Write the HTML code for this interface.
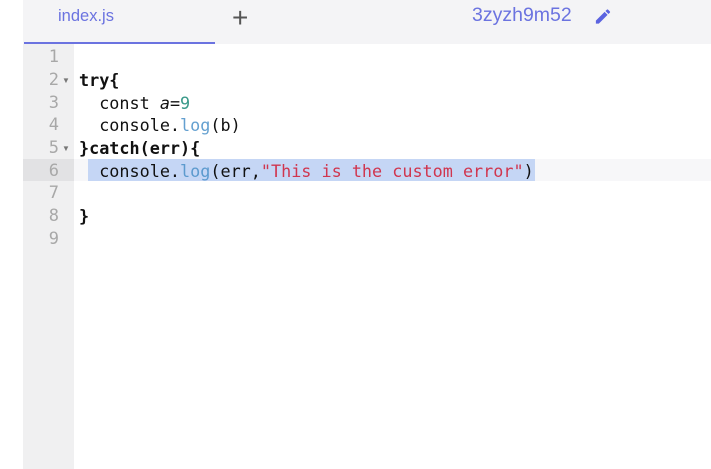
<!DOCTYPE html>
<html><head><style>
body{margin:0;width:711px;height:469px;background:#fff;overflow:hidden;position:relative;font-family:"Liberation Sans",sans-serif}
.hdr{position:absolute;left:23px;top:0;width:688px;height:44px;background:#f4f4f6}
.tab{position:absolute;left:58px;top:7px;font-size:16.5px;color:#6b73e0}
.ul{position:absolute;left:24px;top:42px;width:191px;height:2px;background:#6b73e0}
.plus{position:absolute;left:232px;top:2px;font-size:28px;color:#555;}
.name{position:absolute;left:472px;top:4px;font-size:19.5px;color:#6b73e0}
.gut{position:absolute;left:23px;top:44px;width:51px;height:425px;background:#f0f0f1}
.ln{position:absolute;left:23px;width:36px;text-align:right;font-family:"DejaVu Sans Mono",monospace;font-size:17px;color:#a8a8a8;height:22.7px;line-height:22.7px}
.code{position:absolute;left:79px;font-family:"DejaVu Sans Mono",monospace;font-size:16.8px;color:#111;white-space:pre;height:22.7px;line-height:22.7px}
.bd{font-weight:bold}
.arr{position:absolute;left:62px;font-size:8px;color:#777}
.b{color:#4a90c8;opacity:.85}.n{color:#3a9a8a}.s{color:#d0364f}
</style></head><body>
<div class="hdr"></div>
<div class="tab">index.js</div>
<div class="ul"></div>
<div class="plus">+</div>
<div class="name">3zyzh9m52</div>
<svg style="position:absolute;left:593px;top:7px" width="20" height="19" viewBox="0 0 24 24"><path fill="#5b63e0" d="M3 17.25V21h3.75L17.8 9.94l-3.75-3.75L3 17.25zM20.7 7.04a1 1 0 000-1.41l-2.34-2.34a1 1 0 00-1.41 0l-1.83 1.83 3.75 3.75 1.83-1.83z"/></svg>
<div class="gut"></div>
<div style="position:absolute;left:23px;top:159px;width:51px;height:22px;background:#e2e2e4"></div>
<div style="position:absolute;left:74px;top:159px;width:637px;height:22px;background:#f7f7f9"></div>
<div style="position:absolute;left:88px;top:159px;width:447px;height:22px;background:#c5d6f5"></div>
<div class="ln" style="top:46px">1</div>
<div class="ln" style="top:69px">2</div><div class="arr" style="top:76px">▼</div>
<div class="ln" style="top:92px">3</div>
<div class="ln" style="top:114px">4</div>
<div class="ln" style="top:137px">5</div><div class="arr" style="top:144px">▼</div>
<div class="ln" style="top:160px">6</div>
<div class="ln" style="top:182px">7</div>
<div class="ln" style="top:205px">8</div>
<div class="ln" style="top:228px">9</div>
<div class="code bd" style="top:69px">try{</div>
<div class="code" style="top:92px">  const <i>a</i>=<span class="n">9</span></div>
<div class="code" style="top:114px">  console.<span class="b">log</span>(b)</div>
<div class="code bd" style="top:137px">}catch(err){</div>
<div class="code" style="top:160px">  console.<span class="b">log</span>(err,<span class="s">"This is the custom error"</span>)</div>
<div class="code bd" style="top:205px">}</div>
</body></html>
